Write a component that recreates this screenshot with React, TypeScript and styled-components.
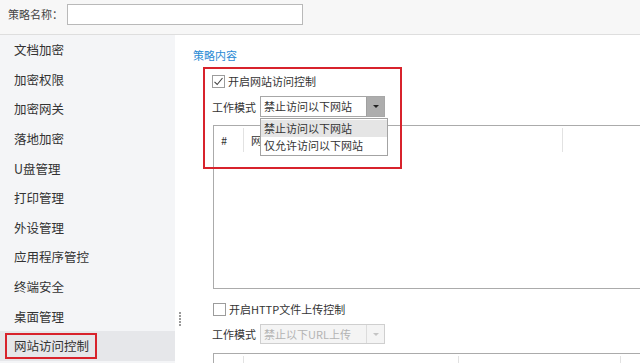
import React from 'react';
import styled, { createGlobalStyle } from 'styled-components';

const GlobalStyle = createGlobalStyle`
  html, body {
    margin: 0;
    padding: 0;
    background: #ffffff;
  }
  body {
    width: 640px;
    height: 363px;
    overflow: hidden;
    font-family: "Noto Sans CJK SC", "Noto Sans", sans-serif;
    color: #333333;
  }
`;

const Page = styled.div`
  width: 640px;
  height: 363px;
  display: flex;
  flex-direction: column;
  overflow: hidden;
`;

const Header = styled.div`
  height: 35px;
  flex: none;
  display: flex;
  align-items: flex-start;
  padding: 4px 0 0 8px;
  box-sizing: border-box;
  background: #f7f7f7;
  border-bottom: 1px solid #dedede;
`;

const HeaderLabel = styled.span`
  font-size: 11px;
  line-height: 21px;
  color: #444;
  width: 59px;
`;

const NameInput = styled.div`
  width: 236px;
  height: 21px;
  box-sizing: border-box;
  border: 1px solid #b9b9b9;
  background: #ffffff;
`;

const Body = styled.div`
  flex: 1;
  display: flex;
  min-height: 0;
`;

const Sidebar = styled.div`
  width: 175px;
  flex: none;
  background: #f4f5f7;
  display: flex;
  flex-direction: column;
`;

const NavItem = styled.div<{ active?: boolean }>`
  height: 29.6px;
  flex: none;
  display: flex;
  align-items: center;
  padding-left: ${({ active }) => (active ? '5px' : '14px')};
  font-size: 12.5px;
  color: #333;
  background: ${({ active }) => (active ? '#e6e7ea' : 'transparent')};
`;

const Marked = styled.span`
  display: inline-block;
  border: 2px solid #d8232c;
  padding: 2px 6px 2px 7px;
  line-height: 18px;
`;

const Splitter = styled.div`
  width: 10px;
  flex: none;
  display: flex;
  flex-direction: column;
  align-items: center;
  gap: 1px;
  padding-top: 277px;
`;

const Dot = styled.span`
  width: 2px;
  height: 2px;
  background: #9a9a9a;
`;

const Content = styled.div`
  flex: 1;
  position: relative;
  padding: 12px 0 0 8px;
  min-width: 0;
`;

const SectionTitle = styled.div`
  font-size: 11px;
  line-height: 16px;
  color: #2a8ad4;
`;

const Section = styled.div`
  padding-left: 19px;
`;

const CheckRow = styled.label<{ gap: number }>`
  display: flex;
  align-items: center;
  gap: 3px;
  height: 16px;
  margin-top: ${({ gap }) => gap}px;
  font-size: 11px;
  color: #333;
`;

const Box = styled.span<{ nudge?: number }>`
  width: 13px;
  height: 13px;
  box-sizing: border-box;
  border: 1px solid #9c9c9c;
  background: #fff;
  display: flex;
  align-items: center;
  justify-content: center;
  margin-left: ${({ nudge }) => nudge || 0}px;
`;

const ModeRow = styled.div<{ gap: number }>`
  display: flex;
  align-items: center;
  margin-top: ${({ gap }) => gap}px;
  font-size: 11px;
`;

const ModeLabel = styled.span`
  width: 48px;
  color: #333;
`;

const SelectWrap = styled.div`
  position: relative;
`;

const Select = styled.div<{ disabled?: boolean }>`
  width: 125px;
  height: ${({ disabled }) => (disabled ? 20 : 21)}px;
  box-sizing: border-box;
  display: flex;
  align-items: stretch;
  border: 1px solid ${({ disabled }) => (disabled ? '#cfcfcf' : '#a7a7a7')};
  background: ${({ disabled }) => (disabled ? '#f4f4f4' : '#ffffff')};
  color: ${({ disabled }) => (disabled ? '#b3b3b3' : '#333')};
`;

const SelectText = styled.span`
  flex: 1;
  padding-left: 3px;
  line-height: 19px;
  font-size: 11px;
  white-space: nowrap;
`;

const Arrow = styled.span<{ disabled?: boolean }>`
  width: 17px;
  display: flex;
  align-items: center;
  justify-content: center;
  background: ${({ disabled }) => (disabled ? '#f4f4f4' : '#adadad')};
  border-left: 1px solid ${({ disabled }) => (disabled ? '#dcdcdc' : '#a0a0a0')};
  &::after {
    content: '';
    border-left: 3px solid transparent;
    border-right: 3px solid transparent;
    border-top: 3px solid ${({ disabled }) => (disabled ? '#c4c4c4' : '#222')};
  }
`;

const Menu = styled.div`
  position: absolute;
  top: 22px;
  left: 0;
  width: 128px;
  box-sizing: border-box;
  border: 1px solid #a3a3a3;
  background: #fff;
  z-index: 2;
  padding: 1px 0;
`;

const MenuItem = styled.div<{ active?: boolean }>`
  height: 17px;
  line-height: 17px;
  padding-left: 3px;
  font-size: 11px;
  color: #333;
  background: ${({ active }) => (active ? '#e5e5e5' : 'transparent')};
`;

const Table = styled.div<{ gap: number; height: number }>`
  margin-top: ${({ gap }) => gap}px;
  margin-left: 1px;
  width: 460px;
  height: ${({ height }) => height}px;
  box-sizing: border-box;
  border: 1px solid #ababab;
  border-right: none;
`;

const HeadRow = styled.div`
  display: flex;
  height: 28px;
`;

const HeadCell = styled.div<{ w?: number }>`
  width: ${({ w }) => (w ? `${w}px` : 'auto')};
  flex: ${({ w }) => (w ? 'none' : 1)};
  box-sizing: border-box;
  padding: 4px 0 0 7px;
  margin: 2px 0;
  font-size: 11px;
  color: #333;
  border-right: 1px solid #e2e2e2;
`;

const Annotation = styled.div`
  position: absolute;
  left: 18px;
  top: 32px;
  width: 199px;
  height: 102px;
  box-sizing: border-box;
  border: 2px solid #d8232c;
  pointer-events: none;
  z-index: 3;
`;

const navItems = [
  '文档加密',
  '加密权限',
  '加密网关',
  '落地加密',
  'U盘管理',
  '打印管理',
  '外设管理',
  '应用程序管控',
  '终端安全',
  '桌面管理',
];

const Check = () => (
  <svg width="11" height="11" viewBox="0 0 11 11">
    <path d="M1.5 5.8 L4.2 8.5 L9.5 2" fill="none" stroke="#444" strokeWidth="1.1" />
  </svg>
);

export default function App() {
  return (
    <Page>
      <GlobalStyle />
      <Header>
        <HeaderLabel>策略名称：</HeaderLabel>
        <NameInput />
      </Header>
      <Body>
        <Sidebar>
          {navItems.map((item) => (
            <NavItem key={item}>{item}</NavItem>
          ))}
          <NavItem active>
            <Marked>网站访问控制</Marked>
          </NavItem>
        </Sidebar>
        <Splitter>
          {[0, 1, 2, 3, 4].map((i) => (
            <Dot key={i} />
          ))}
        </Splitter>
        <Content>
          <SectionTitle>策略内容</SectionTitle>
          <Section>
            <CheckRow gap={10}>
              <Box>
                <Check />
              </Box>
              开启网站访问控制
            </CheckRow>
            <ModeRow gap={7}>
              <ModeLabel>工作模式</ModeLabel>
              <SelectWrap>
                <Select>
                  <SelectText>禁止访问以下网站</SelectText>
                  <Arrow />
                </Select>
                <Menu>
                  <MenuItem active>禁止访问以下网站</MenuItem>
                  <MenuItem>仅允许访问以下网站</MenuItem>
                </Menu>
              </SelectWrap>
            </ModeRow>
            <Table gap={8} height={164}>
              <HeadRow>
                <HeadCell w={30}>#</HeadCell>
                <HeadCell w={319}>网址</HeadCell>
                <HeadCell />
              </HeadRow>
            </Table>
            <CheckRow gap={12}>
              <Box nudge={1} />
              开启HTTP文件上传控制
            </CheckRow>
            <ModeRow gap={7}>
              <ModeLabel>工作模式</ModeLabel>
              <Select disabled>
                <SelectText>禁止以下URL上传</SelectText>
                <Arrow disabled />
              </Select>
            </ModeRow>
            <Table gap={9} height={60}>
              <HeadRow>
                <HeadCell w={30}>#</HeadCell>
                <HeadCell w={215}>URL</HeadCell>
                <HeadCell w={162}>备注</HeadCell>
                <HeadCell />
              </HeadRow>
            </Table>
          </Section>
          <Annotation />
        </Content>
      </Body>
    </Page>
  );
}
